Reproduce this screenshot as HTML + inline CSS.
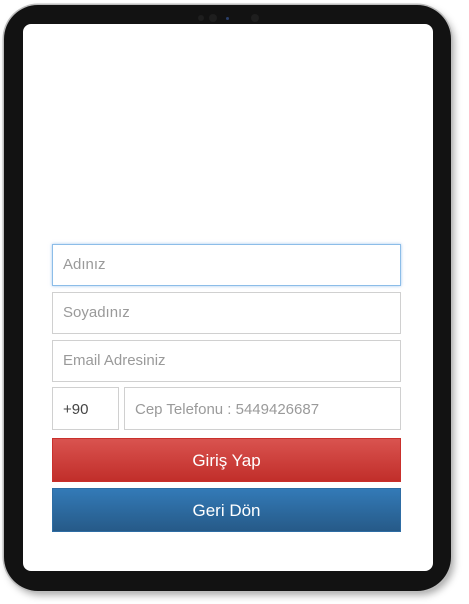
<!DOCTYPE html>
<html><head><meta charset="utf-8"><style>
html,body{margin:0;padding:0;width:469px;height:604px;background:#fff;overflow:hidden;font-family:"Liberation Sans",sans-serif;}
.dev{position:absolute;left:4px;top:5px;width:447px;height:586px;border-radius:34px;background:#121212;box-shadow:0 0 0 1.5px #bdbdbd,3px 4px 8px rgba(0,0,0,.35);}
.scr{position:absolute;left:23px;top:24px;width:410px;height:547px;border-radius:8px;background:#fff;}
.cam{position:absolute;top:10px;border-radius:50%;background:#1e1e1e;}
.f{position:absolute;left:52px;width:347px;height:40px;border:1px solid #d0d0d0;box-sizing:content-box;font-size:15px;color:#9a9a9a;line-height:40px;padding-left:10px;box-sizing:border-box;width:349px;height:42px;}
.b{position:absolute;left:52px;width:349px;height:44px;color:#fff;font-size:17px;text-align:center;line-height:44px;}
</style></head><body>
<div class="dev">
<div class="cam" style="left:194px;width:6px;height:6px"></div>
<div class="cam" style="left:205px;width:8px;height:8px;top:9px"></div>
<div class="cam" style="left:222px;width:3px;height:3px;top:12px;background:#2a3f6a"></div>
<div class="cam" style="left:247px;width:8px;height:8px;top:9px"></div>
</div>
<div class="scr"></div>
<div class="f" style="top:244px;border-color:#8cbde8;box-shadow:0 0 3px rgba(100,160,230,.6)">Adınız</div>
<div class="f" style="top:292px">Soyadınız</div>
<div class="f" style="top:340px">Email Adresiniz</div>
<div class="f" style="top:387px;width:67px;height:43px;line-height:43px;color:#444">+90</div>
<div class="f" style="top:387px;left:124px;width:277px;height:43px;line-height:43px">Cep Telefonu : 5449426687</div>
<div class="b" style="top:438px;background:linear-gradient(#d9534f,#c12e2a);border:1px solid #c9302c;box-sizing:border-box">Giriş Yap</div>
<div class="b" style="top:488px;background:linear-gradient(#337ab7,#265a88);border:1px solid #2e6da4;box-sizing:border-box">Geri Dön</div>
</body></html>
